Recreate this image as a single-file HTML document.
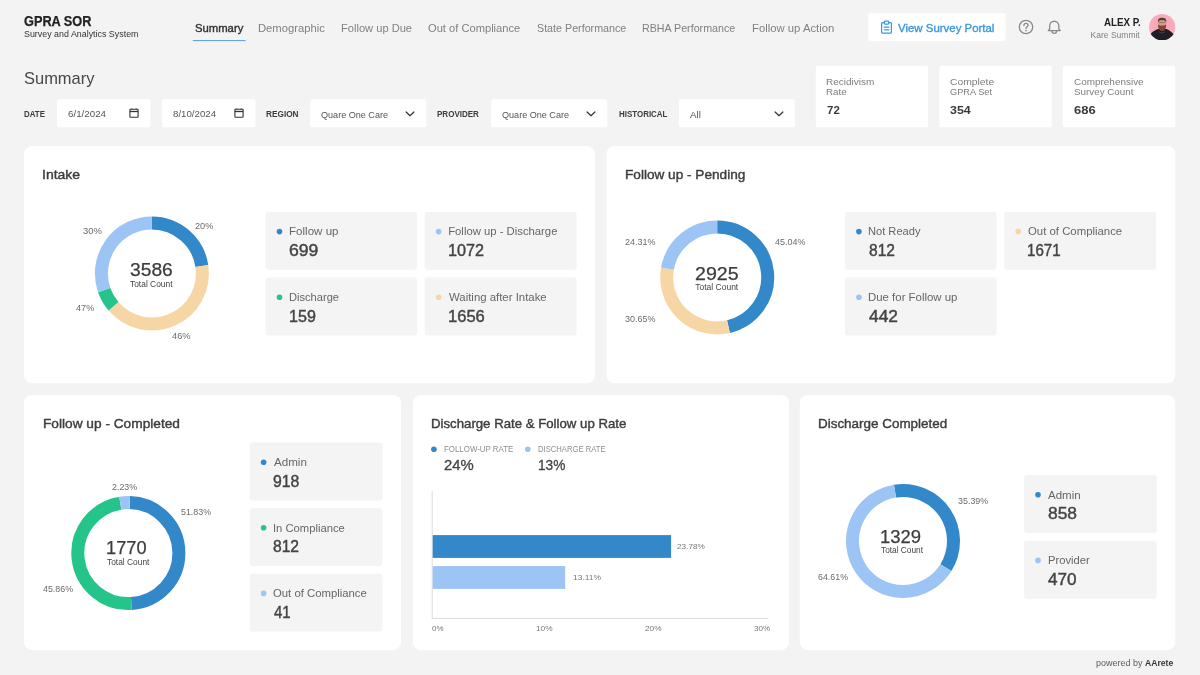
<!DOCTYPE html>
<html lang="en">
<head>
<meta charset="utf-8">
<title>GPRA SOR - Summary</title>
<style>
html,body{margin:0;padding:0}
body{width:1200px;height:675px;overflow:hidden;background:#f3f3f3;font-family:"Liberation Sans", sans-serif;position:relative}
#app{position:absolute;left:0;top:0;width:1200px;height:675px;overflow:hidden;will-change:transform}
#app>div,#app>svg,#app>span{position:absolute;display:block}
#app>span{white-space:nowrap;line-height:1;transform-origin:0 0}
</style>
</head>
<body>
<div id="app">
<svg style="left:0;top:0" width="1200" height="675" viewBox="0 0 1200 675">
<rect x="192.8" y="40" width="52.8" height="1.1" fill="#62a5e0"/>
<rect x="868.25" y="13.25" width="137.35" height="27.75" rx="2" fill="#fff"/>
<rect x="57" y="99.25" width="93.5" height="28" rx="2" fill="#fff"/>
<rect x="162" y="99.25" width="93.5" height="28" rx="2" fill="#fff"/>
<rect x="310.25" y="99.25" width="116" height="28" rx="2" fill="#fff"/>
<rect x="491" y="99.25" width="116.25" height="28" rx="2" fill="#fff"/>
<rect x="679" y="99.25" width="115.75" height="28" rx="2" fill="#fff"/>
<rect x="815.8" y="65.8" width="112.2" height="61.5" rx="2" fill="#fff"/>
<rect x="939.4" y="65.8" width="112.4" height="61.5" rx="2" fill="#fff"/>
<rect x="1062.9" y="65.8" width="112.4" height="61.5" rx="2" fill="#fff"/>
<rect x="24" y="146" width="571" height="237.3" rx="8" fill="#fff"/>
<rect x="606.5" y="146" width="568.8" height="237.3" rx="8" fill="#fff"/>
<rect x="24" y="395" width="377" height="255.2" rx="8" fill="#fff"/>
<rect x="413" y="395" width="376" height="255.2" rx="8" fill="#fff"/>
<rect x="799.8" y="395" width="375.5" height="255.2" rx="8" fill="#fff"/>
<rect x="265.5" y="212" width="151.6" height="57.7" rx="3" fill="#f4f4f4"/>
<circle cx="279.5" cy="231.6" r="2.8" fill="#3388c9"/>
<rect x="424.7" y="212" width="151.9" height="57.7" rx="3" fill="#f4f4f4"/>
<circle cx="438.7" cy="231.6" r="2.8" fill="#9cc4f4"/>
<rect x="265.5" y="277.6" width="151.6" height="57.8" rx="3" fill="#f4f4f4"/>
<circle cx="279.5" cy="297.2" r="2.8" fill="#25c48b"/>
<rect x="424.7" y="277.6" width="151.9" height="57.8" rx="3" fill="#f4f4f4"/>
<circle cx="438.7" cy="297.2" r="2.8" fill="#f7d6a5"/>
<rect x="844.9" y="212" width="151.6" height="57.7" rx="3" fill="#f4f4f4"/>
<circle cx="858.9" cy="231.6" r="2.8" fill="#3388c9"/>
<rect x="1004.2" y="212" width="151.9" height="57.7" rx="3" fill="#f4f4f4"/>
<circle cx="1018.2" cy="231.6" r="2.8" fill="#f7d6a5"/>
<rect x="844.9" y="277.6" width="151.6" height="57.8" rx="3" fill="#f4f4f4"/>
<circle cx="858.9" cy="297.2" r="2.8" fill="#9cc4f4"/>
<rect x="249.6" y="442.6" width="132.9" height="57.9" rx="3" fill="#f4f4f4"/>
<circle cx="263.6" cy="462.2" r="2.8" fill="#3388c9"/>
<rect x="249.6" y="508.2" width="132.9" height="57.9" rx="3" fill="#f4f4f4"/>
<circle cx="263.6" cy="527.8" r="2.8" fill="#25c48b"/>
<rect x="249.6" y="573.8" width="132.9" height="57.8" rx="3" fill="#f4f4f4"/>
<circle cx="263.6" cy="593.4" r="2.8" fill="#9cc4f4"/>
<rect x="1024" y="475.1" width="132.8" height="58" rx="3" fill="#f4f4f4"/>
<circle cx="1038" cy="494.7" r="2.8" fill="#3388c9"/>
<rect x="1024" y="540.8" width="132.8" height="58" rx="3" fill="#f4f4f4"/>
<circle cx="1038" cy="560.4" r="2.8" fill="#9cc4f4"/>
<circle cx="433.9" cy="449.2" r="2.8" fill="#3388c9"/>
<circle cx="527.8" cy="449.2" r="2.8" fill="#9cc4f4"/>
<rect x="431.7" y="491.2" width="1" height="127.7" fill="#dcdcdc"/>
<rect x="431.7" y="617.9" width="336.8" height="1" fill="#dcdcdc"/>
<rect x="432.7" y="535.1" width="238.4" height="22.8" fill="#3388c9"/>
<rect x="432.7" y="566.1" width="132.5" height="22.8" fill="#9cc4f4"/>
</svg>
<svg style="left:880.4px;top:19.7px" width="13" height="15" viewBox="0 0 13 15" fill="none" stroke="#3d97de" stroke-width="1.25"><rect x="1.600" y="2.700" width="9.800" height="10.300" rx="0.900"/><rect x="4.300" y="1.200" width="4.400" height="2.800" rx="0.700" fill="#fff"/><path d="M4.200 7.200h4.600M4.200 9.800h4.600" stroke-linecap="round"/></svg>
<svg style="left:1017.6px;top:19.1px" width="16" height="16" viewBox="0 0 16 16" fill="none" stroke="#8a8a8a" stroke-width="1.300"><circle cx="8" cy="8" r="6.700"/><path d="M5.900 6.500c0-1.300 0.900-2.100 2.100-2.100s2.100 0.800 2.100 1.900c0 1.500-2.100 1.500-2.100 3.200" stroke-linecap="round"/><circle cx="8" cy="11.500" r="0.850" fill="#8a8a8a" stroke="none"/></svg>
<svg style="left:1045.6px;top:19px" width="16" height="16" viewBox="0 0 16 16" fill="none" stroke="#8a8a8a" stroke-width="1.300" stroke-linejoin="round"><path d="M3.700 9.900V6.800a4.550 4.550 0 0 1 9.100 0v3.100l1.500 1.700H2.200z"/><path d="M5.900 12a2.350 2.350 0 0 0 4.700 0" stroke-linecap="round"/></svg>
<svg style="left:1149.4px;top:13.6px" width="26.4" height="26.4" viewBox="0 0 40 40"><defs><clipPath id="av"><circle cx="20" cy="20" r="20"/></clipPath><radialGradient id="avg" cx="0.5" cy="0.45" r="0.6"><stop offset="0" stop-color="#f7a0b1"/><stop offset="1" stop-color="#f9b3c0"/></radialGradient></defs><g clip-path="url(#av)"><rect width="40" height="40" fill="url(#avg)"/><path d="M1 31.500C5 27 9 24.500 13.500 22.800h13C31 24.500 35 27.500 39 32.500V41H1z" fill="#1f1e27"/><g transform="translate(0.500 0)"><rect x="13.400" y="7.500" width="12" height="13" rx="5.200" fill="#d3a08d"/><path d="M13.100 12.800c-0.700-5 2-7 6.300-7s7 2 6.300 7c-0.800-2.600-2.500-3.400-6.300-3.400s-5.500 0.800-6.300 3.400z" fill="#5e3d33"/><path d="M13.500 15.800c1.500 1.300 3.600 1.700 5.900 1.700s4.400-0.400 5.900-1.700c0.600 4.800-1.400 10-5.900 10s-6.500-5.200-5.900-10z" fill="#85442f"/><path d="M14.200 13h10.400" stroke="#7a625a" stroke-width="1" fill="none"/></g><path d="M15 26.800l4.400 2.400 4.600-2.400" stroke="#4c4c5a" stroke-width="1.300" fill="none"/></g></svg>
<svg style="left:129.1px;top:108.3px" width="10" height="10" viewBox="0 0 10 10" fill="none" stroke="#333" stroke-width="1.100"><rect x="0.900" y="1.300" width="8.200" height="7.900" rx="0.500"/><path d="M0.900 3.500h8.200" stroke-width="1.300"/><path d="M2.800 0.500v1M7.200 0.500v1"/></svg>
<svg style="left:233.8px;top:108.3px" width="10" height="10" viewBox="0 0 10 10" fill="none" stroke="#333" stroke-width="1.100"><rect x="0.900" y="1.300" width="8.200" height="7.900" rx="0.500"/><path d="M0.900 3.500h8.200" stroke-width="1.300"/><path d="M2.800 0.500v1M7.200 0.500v1"/></svg>
<svg style="left:405.4px;top:111.2px" width="10" height="6" viewBox="0 0 10 6" fill="none" stroke="#333" stroke-width="1.200" stroke-linecap="round" stroke-linejoin="round"><path d="M1.100 1l3.900 3.700L8.900 1"/></svg>
<svg style="left:586.4px;top:111.2px" width="10" height="6" viewBox="0 0 10 6" fill="none" stroke="#333" stroke-width="1.200" stroke-linecap="round" stroke-linejoin="round"><path d="M1.100 1l3.900 3.700L8.900 1"/></svg>
<svg style="left:773.7px;top:111.2px" width="10" height="6" viewBox="0 0 10 6" fill="none" stroke="#333" stroke-width="1.200" stroke-linecap="round" stroke-linejoin="round"><path d="M1.100 1l3.900 3.700L8.900 1"/></svg>
<svg style="left:0;top:0" width="1200" height="675" viewBox="0 0 1200 675" fill="none" stroke-width="13"><path d="M151.90 223.00A50.5 50.5 0 0 1 201.83 265.95" stroke="#3388c9"/><path d="M201.83 265.95A50.5 50.5 0 0 1 113.50 306.30" stroke="#f7d6a5"/><path d="M113.50 306.30A50.5 50.5 0 0 1 104.21 290.11" stroke="#25c48b"/><path d="M104.21 290.11A50.5 50.5 0 0 1 151.90 223.00" stroke="#9cc4f4"/></svg>
<svg style="left:0;top:0" width="1200" height="675" viewBox="0 0 1200 675" fill="none" stroke-width="13"><path d="M717.20 226.90A50.5 50.5 0 0 1 728.47 326.63" stroke="#3388c9"/><path d="M728.47 326.63A50.5 50.5 0 0 1 667.45 268.72" stroke="#f7d6a5"/><path d="M667.45 268.72A50.5 50.5 0 0 1 717.20 226.90" stroke="#9cc4f4"/></svg>
<svg style="left:0;top:0" width="1200" height="675" viewBox="0 0 1200 675" fill="none" stroke-width="13"><path d="M129.80 502.62A50.5 50.5 0 0 1 131.38 603.51" stroke="#3388c9"/><path d="M131.38 603.51A50.5 50.5 0 0 1 120.31 503.24" stroke="#25c48b"/><path d="M120.31 503.24A50.5 50.5 0 0 1 129.80 502.62" stroke="#9cc4f4"/></svg>
<svg style="left:0;top:0" width="1200" height="675" viewBox="0 0 1200 675" fill="none" stroke-width="13"><path d="M895.01 491.14A50.5 50.5 0 0 1 945.92 567.61" stroke="#3388c9"/><path d="M945.92 567.61A50.5 50.5 0 1 1 895.01 491.14" stroke="#9cc4f4"/></svg>
<span id="t0" style="left:23.99px;top:15px;font-size:13.8px;color:#222;font-weight:700;-webkit-text-stroke:0.25px #222;transform:scaleX(0.9232)">GPRA SOR</span>
<span id="t1" style="left:24.10px;top:29px;font-size:9.5px;color:#333;transform:scaleX(0.9344)">Survey and Analytics System</span>
<span id="t2" style="left:194.69px;top:23px;font-size:11.5px;color:#333;-webkit-text-stroke:0.4px #333;transform:scaleX(0.9818)">Summary</span>
<span id="t3" style="left:258.10px;top:23px;font-size:11.5px;color:#808080;transform:scaleX(0.9777)">Demographic</span>
<span id="t4" style="left:340.71px;top:23px;font-size:11.5px;color:#808080;transform:scaleX(0.9664)">Follow up Due</span>
<span id="t5" style="left:428.00px;top:23px;font-size:11.5px;color:#808080;transform:scaleX(0.9686)">Out of Compliance</span>
<span id="t6" style="left:536.92px;top:23px;font-size:11.5px;color:#808080;transform:scaleX(0.9315)">State Performance</span>
<span id="t7" style="left:642.45px;top:23px;font-size:11.5px;color:#808080;transform:scaleX(0.9286)">RBHA Performance</span>
<span id="t8" style="left:752.40px;top:23px;font-size:11.5px;color:#808080;transform:scaleX(0.9826)">Follow up Action</span>
<span id="t9" style="left:898.00px;top:23px;font-size:11.3px;color:#3d97de;-webkit-text-stroke:0.35px #3d97de;transform:scaleX(1.0124)">View Survey Portal</span>
<span id="t10" style="left:1103.66px;top:17px;font-size:11px;color:#222;font-weight:700;transform:scaleX(0.8896)">ALEX P.</span>
<span id="t11" style="left:1090.62px;top:31px;font-size:8.5px;color:#808080">Kare Summit</span>
<span id="t12" style="left:23.86px;top:70px;font-size:17px;color:#484848;transform:scaleX(0.9685)">Summary</span>
<span id="t13" style="left:24.39px;top:110px;font-size:8.7px;color:#3c3c3c;font-weight:700;transform:scaleX(0.9084)">DATE</span>
<span id="t14" style="left:68.01px;top:110px;font-size:9.3px;color:#555;transform:scaleX(1.0495)">6/1/2024</span>
<span id="t15" style="left:172.61px;top:110px;font-size:9.3px;color:#555;transform:scaleX(1.0431)">8/10/2024</span>
<span id="t16" style="left:266.46px;top:110px;font-size:8.7px;color:#3c3c3c;font-weight:700;transform:scaleX(0.9508)">REGION</span>
<span id="t17" style="left:321.09px;top:110px;font-size:9.5px;color:#555;transform:scaleX(0.9544)">Quare One Care</span>
<span id="t18" style="left:436.98px;top:110px;font-size:8.7px;color:#3c3c3c;font-weight:700;transform:scaleX(0.9233)">PROVIDER</span>
<span id="t19" style="left:502.09px;top:110px;font-size:9.5px;color:#555;transform:scaleX(0.9544)">Quare One Care</span>
<span id="t20" style="left:618.78px;top:110px;font-size:8.7px;color:#3c3c3c;font-weight:700;transform:scaleX(0.9147)">HISTORICAL</span>
<span id="t21" style="left:690.00px;top:110px;font-size:9.5px;color:#555;transform:scaleX(1.0279)">All</span>
<span id="t22" style="left:826.30px;top:77px;font-size:9.5px;color:#7d7d7d;transform:scaleX(1.0521)">Recidivism</span>
<span id="t23" style="left:826.32px;top:87px;font-size:9.5px;color:#7d7d7d;transform:scaleX(1.0250)">Rate</span>
<span id="t24" style="left:826.64px;top:105px;font-size:11px;color:#3a3a3a;font-weight:700;transform:scaleX(1.0428)">72</span>
<span id="t25" style="left:949.98px;top:77px;font-size:9.5px;color:#7d7d7d;transform:scaleX(1.0865)">Complete</span>
<span id="t26" style="left:950.04px;top:87px;font-size:9.5px;color:#7d7d7d;transform:scaleX(0.9694)">GPRA Set</span>
<span id="t27" style="left:950.25px;top:105px;font-size:11px;color:#3a3a3a;font-weight:700;transform:scaleX(1.1309)">354</span>
<span id="t28" style="left:1073.75px;top:77px;font-size:9.5px;color:#7d7d7d;transform:scaleX(1.0467)">Comprehensive</span>
<span id="t29" style="left:1073.81px;top:87px;font-size:9.5px;color:#7d7d7d;transform:scaleX(1.0331)">Survey Count</span>
<span id="t30" style="left:1073.80px;top:105px;font-size:11px;color:#3a3a3a;font-weight:700;transform:scaleX(1.1806)">686</span>
<span id="t31" style="left:42.14px;top:168px;font-size:13px;color:#3d3d3d;-webkit-text-stroke:0.4px #3d3d3d;transform:scaleX(1.0766)">Intake</span>
<span id="t32" style="left:624.81px;top:168px;font-size:13px;color:#3d3d3d;-webkit-text-stroke:0.4px #3d3d3d;transform:scaleX(1.0471)">Follow up - Pending</span>
<span id="t33" style="left:42.61px;top:417px;font-size:13px;color:#3d3d3d;-webkit-text-stroke:0.4px #3d3d3d;transform:scaleX(1.0528)">Follow up - Completed</span>
<span id="t34" style="left:430.54px;top:417px;font-size:13px;color:#3d3d3d;-webkit-text-stroke:0.4px #3d3d3d;transform:scaleX(1.0161)">Discharge Rate &amp; Follow up Rate</span>
<span id="t35" style="left:817.63px;top:417px;font-size:13px;color:#3d3d3d;-webkit-text-stroke:0.4px #3d3d3d;transform:scaleX(1.0334)">Discharge Completed</span>
<span id="t36" style="left:130.23px;top:262px;font-size:17.5px;color:#3c3c3c;-webkit-text-stroke:0.25px #3c3c3c;transform:scaleX(1.0983)">3586</span>
<span id="t37" style="left:130.23px;top:280px;font-size:8.5px;color:#444;transform:scaleX(0.9882)">Total Count</span>
<span id="t38" style="left:195.14px;top:222px;font-size:9.3px;color:#6c6c6c;transform:scaleX(0.9873)">20%</span>
<span id="t39" style="left:83.37px;top:227px;font-size:9.3px;color:#6c6c6c;transform:scaleX(1.0186)">30%</span>
<span id="t40" style="left:76.02px;top:304px;font-size:9.3px;color:#6c6c6c;transform:scaleX(0.9831)">47%</span>
<span id="t41" style="left:171.82px;top:332px;font-size:9.3px;color:#6c6c6c;transform:scaleX(0.9942)">46%</span>
<span id="t42" style="left:694.92px;top:266px;font-size:17.5px;color:#3c3c3c;-webkit-text-stroke:0.25px #3c3c3c;transform:scaleX(1.1194)">2925</span>
<span id="t43" style="left:695.23px;top:283px;font-size:8.5px;color:#444">Total Count</span>
<span id="t44" style="left:775.12px;top:238px;font-size:9.3px;color:#6c6c6c;transform:scaleX(0.9664)">45.04%</span>
<span id="t45" style="left:625.15px;top:238px;font-size:9.3px;color:#6c6c6c;transform:scaleX(0.9687)">24.31%</span>
<span id="t46" style="left:625.29px;top:315px;font-size:9.3px;color:#6c6c6c;transform:scaleX(0.9643)">30.65%</span>
<span id="t47" style="left:105.93px;top:540px;font-size:17.5px;color:#3c3c3c;-webkit-text-stroke:0.25px #3c3c3c;transform:scaleX(1.0408)">1770</span>
<span id="t48" style="left:106.73px;top:558px;font-size:8.5px;color:#444;transform:scaleX(0.9858)">Total Count</span>
<span id="t49" style="left:112.46px;top:483px;font-size:9.3px;color:#6c6c6c;transform:scaleX(0.9534)">2.23%</span>
<span id="t50" style="left:180.95px;top:508px;font-size:9.3px;color:#6c6c6c;transform:scaleX(0.9528)">51.83%</span>
<span id="t51" style="left:43.12px;top:585px;font-size:9.3px;color:#6c6c6c;transform:scaleX(0.9535)">45.86%</span>
<span id="t52" style="left:880.22px;top:529px;font-size:17.5px;color:#3c3c3c;-webkit-text-stroke:0.25px #3c3c3c;transform:scaleX(1.0539)">1329</span>
<span id="t53" style="left:880.93px;top:546px;font-size:8.5px;color:#444;transform:scaleX(0.9765)">Total Count</span>
<span id="t54" style="left:958.09px;top:497px;font-size:9.3px;color:#6c6c6c;transform:scaleX(0.9578)">35.39%</span>
<span id="t55" style="left:818.46px;top:573px;font-size:9.3px;color:#6c6c6c;transform:scaleX(0.9524)">64.61%</span>
<span id="t56" style="left:288.97px;top:226px;font-size:11.3px;color:#666;transform:scaleX(1.0236)">Follow up</span>
<span id="t57" style="left:289.02px;top:243px;font-size:16px;color:#444;-webkit-text-stroke:0.42px #444;transform:scaleX(1.1008)">699</span>
<span id="t58" style="left:448.20px;top:226px;font-size:11.3px;color:#666">Follow up - Discharge</span>
<span id="t59" style="left:447.89px;top:243px;font-size:16px;color:#444;-webkit-text-stroke:0.42px #444;transform:scaleX(1.0103)">1072</span>
<span id="t60" style="left:289.01px;top:292px;font-size:11.3px;color:#666;transform:scaleX(0.9840)">Discharge</span>
<span id="t61" style="left:288.69px;top:309px;font-size:16px;color:#444;-webkit-text-stroke:0.42px #444;transform:scaleX(1.0055)">159</span>
<span id="t62" style="left:449.10px;top:292px;font-size:11.3px;color:#666;transform:scaleX(1.0079)">Waiting after Intake</span>
<span id="t63" style="left:447.86px;top:309px;font-size:16px;color:#444;-webkit-text-stroke:0.42px #444;transform:scaleX(1.0345)">1656</span>
<span id="t64" style="left:868.41px;top:226px;font-size:11.3px;color:#666;transform:scaleX(0.9834)">Not Ready</span>
<span id="t65" style="left:868.68px;top:243px;font-size:16px;color:#444;-webkit-text-stroke:0.42px #444;transform:scaleX(0.9714)">812</span>
<span id="t66" style="left:1028.09px;top:226px;font-size:11.3px;color:#666;transform:scaleX(1.0066)">Out of Compliance</span>
<span id="t67" style="left:1027.47px;top:243px;font-size:16px;color:#444;-webkit-text-stroke:0.42px #444;transform:scaleX(0.9419)">1671</span>
<span id="t68" style="left:868.39px;top:292px;font-size:11.3px;color:#666;transform:scaleX(1.0106)">Due for Follow up</span>
<span id="t69" style="left:868.95px;top:309px;font-size:16px;color:#444;-webkit-text-stroke:0.42px #444;transform:scaleX(1.0841)">442</span>
<span id="t70" style="left:274.00px;top:457px;font-size:11.3px;color:#666;transform:scaleX(1.0274)">Admin</span>
<span id="t71" style="left:273.29px;top:474px;font-size:16px;color:#444;-webkit-text-stroke:0.42px #444;transform:scaleX(0.9872)">918</span>
<span id="t72" style="left:272.99px;top:523px;font-size:11.3px;color:#666;transform:scaleX(0.9952)">In Compliance</span>
<span id="t73" style="left:273.38px;top:539px;font-size:16px;color:#444;-webkit-text-stroke:0.42px #444;transform:scaleX(0.9753)">812</span>
<span id="t74" style="left:273.49px;top:588px;font-size:11.3px;color:#666;transform:scaleX(1.0023)">Out of Compliance</span>
<span id="t75" style="left:273.70px;top:605px;font-size:16px;color:#444;-webkit-text-stroke:0.42px #444;transform:scaleX(0.9380)">41</span>
<span id="t76" style="left:1048.40px;top:490px;font-size:11.3px;color:#666;transform:scaleX(1.0179)">Admin</span>
<span id="t77" style="left:1047.70px;top:506px;font-size:16px;color:#444;-webkit-text-stroke:0.42px #444;transform:scaleX(1.0864)">858</span>
<span id="t78" style="left:1047.50px;top:555px;font-size:11.3px;color:#666;transform:scaleX(0.9920)">Provider</span>
<span id="t79" style="left:1048.06px;top:572px;font-size:16px;color:#444;-webkit-text-stroke:0.42px #444;transform:scaleX(1.0696)">470</span>
<span id="t80" style="left:444.12px;top:445px;font-size:8.5px;color:#8e8e8e;transform:scaleX(0.9288)">FOLLOW-UP RATE</span>
<span id="t81" style="left:537.99px;top:445px;font-size:8.5px;color:#8e8e8e;transform:scaleX(0.9012)">DISCHARGE RATE</span>
<span id="t82" style="left:444.01px;top:458px;font-size:14px;color:#444;-webkit-text-stroke:0.3px #444;transform:scaleX(1.0595)">24%</span>
<span id="t83" style="left:537.57px;top:458px;font-size:14px;color:#444;-webkit-text-stroke:0.3px #444;transform:scaleX(0.9772)">13%</span>
<span id="t84" style="left:676.59px;top:543px;font-size:8px;color:#777;transform:scaleX(1.0239)">23.78%</span>
<span id="t85" style="left:572.77px;top:574px;font-size:8px;color:#777;transform:scaleX(1.0556)">13.11%</span>
<span id="t86" style="left:431.82px;top:625px;font-size:8px;color:#777;transform:scaleX(0.9901)">0%</span>
<span id="t87" style="left:535.88px;top:625px;font-size:8px;color:#777;transform:scaleX(1.0368)">10%</span>
<span id="t88" style="left:644.79px;top:625px;font-size:8px;color:#777;transform:scaleX(1.0298)">20%</span>
<span id="t89" style="left:753.72px;top:625px;font-size:8px;color:#777;transform:scaleX(1.0154)">30%</span>
<span id="t90" style="left:1095.76px;top:659px;font-size:8.5px;color:#5a5a5a;transform:scaleX(1.0566)">powered by</span>
<span id="t91" style="left:1144.98px;top:659px;font-size:8.6px;color:#383838;font-weight:700;transform:scaleX(1.0034)">AArete</span>
</div>
</body>
</html>
